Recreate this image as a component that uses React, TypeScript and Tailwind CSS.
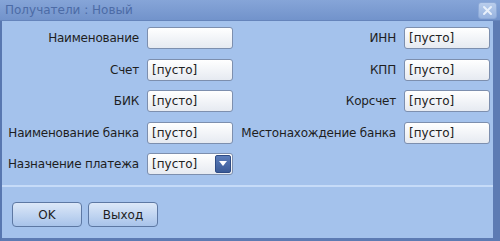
import React from 'react';

const Field: React.FC<{ value?: string }> = ({ value }) => (
  <div className="h-[22px] w-[86px] rounded-[3px] border border-[#7d8fae] bg-gradient-to-b from-white to-[#e6eaf1] px-[4px] text-[12px] leading-[20px] text-[#222]">
    {value}
  </div>
);

const Label: React.FC<{ text: string }> = ({ text }) => (
  <div className="flex h-[22px] items-center justify-end whitespace-nowrap text-[12px] tracking-[-0.2px] text-[#1e1e1e]">{text}</div>
);

const App: React.FC = () => {
  return (
    <div
      className="flex h-[241px] w-[500px] flex-col bg-[#a4c2ec]"
      style={{ fontFamily: '"DejaVu Sans", Verdana, sans-serif' }}
    >
      <div className="flex h-[21px] items-center justify-between border-b border-[#6584bb] bg-gradient-to-b from-[#86a5d8] to-[#7293cb] pl-[5px] pr-[3px]">
        <span className="text-[12px] text-[#4c6ba6]">Получатели : Новый</span>
        <div className="flex h-[17px] w-[19px] items-center justify-center rounded-[3px] border border-[#8eaad8] bg-gradient-to-b from-[#b9cdec] to-[#98b4e0]">
          <svg width="11" height="11" viewBox="0 0 11 11">
            <path d="M2 2 L9 9 M9 2 L2 9" stroke="#e8f0fb" strokeWidth="2" strokeLinecap="round" />
          </svg>
        </div>
      </div>
      <div className="flex flex-1 flex-col border-l-2 border-r-[7px] border-b-[3px] border-l-[#5877b0] border-r-[#5d7bb3] border-b-[#5d7bb3]">
        <div className="grid grid-cols-[137px_86px_155px_86px] gap-x-[8px] gap-y-[9.5px] pt-[6px]">
          <Label text="Наименование" />
          <Field />
          <Label text="ИНН" />
          <Field value="[пусто]" />
          <Label text="Счет" />
          <Field value="[пусто]" />
          <Label text="КПП" />
          <Field value="[пусто]" />
          <Label text="БИК" />
          <Field value="[пусто]" />
          <Label text="Корсчет" />
          <Field value="[пусто]" />
          <Label text="Наименование банка" />
          <Field value="[пусто]" />
          <Label text="Местонахождение банка" />
          <Field value="[пусто]" />
          <Label text="Назначение платежа" />
          <div className="flex h-[22px] w-[86px] items-center rounded-[3px] border border-[#7d8fae] bg-gradient-to-b from-white to-[#e6eaf1] pl-[4px] pr-[1px] text-[12px] text-[#222]">
            <span className="flex-1">[пусто]</span>
            <div className="flex h-[18px] w-[16px] items-center justify-center rounded-[2px] border border-[#2f4c85] bg-gradient-to-b from-[#5c7dba] to-[#3b5b98]">
              <svg width="8" height="6" viewBox="0 0 8 6">
                <path d="M0 0 L8 0 L4 5 Z" fill="#fff" />
              </svg>
            </div>
          </div>
        </div>
        <div className="mt-[10px] h-[2px] bg-[#c6dbf8]" />
        <div className="flex gap-[6px] pl-[10px] pt-[15px]">
          <button className="h-[25px] w-[70px] rounded-[4px] border border-[#5d78a3] bg-gradient-to-b from-[#dce8f8] to-[#a8c3ea] text-[12px] text-[#1e1e1e]">
            OK
          </button>
          <button className="h-[25px] w-[70px] rounded-[4px] border border-[#5d78a3] bg-gradient-to-b from-[#dce8f8] to-[#a8c3ea] text-[12px] text-[#1e1e1e]">
            Выход
          </button>
        </div>
      </div>
    </div>
  );
};

export default App;
